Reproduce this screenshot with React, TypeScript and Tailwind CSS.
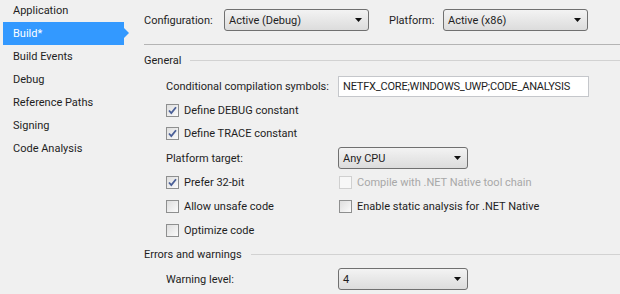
import React from 'react'

const NAV = ['Application', 'Build*', 'Build Events', 'Debug', 'Reference Paths', 'Signing', 'Code Analysis']

function Dropdown({ value, width }: { value: string; width: string }) {
  return (
    <div
      className={`${width} h-[22px] flex items-center justify-between pl-[4px] pr-[6px] rounded-[3px] border border-[#707070]
        bg-gradient-to-b from-[#f3f3f3] to-[#dcdcdc] text-[#1e1e1e]`}
    >
      <span>{value}</span>
      <svg width="7" height="4" viewBox="0 0 7 4">
        <path d="M0 0h7L3.5 4z" fill="#111" />
      </svg>
    </div>
  )
}

function Check({ checked, disabled, label }: { checked?: boolean; disabled?: boolean; label: string }) {
  return (
    <div className={`flex items-center gap-[5px] whitespace-nowrap ${disabled ? 'text-[#a8a8a8]' : 'text-[#1e1e1e]'}`}>
      <div
        className={`w-[13px] h-[13px] border flex items-center justify-center
          ${disabled ? 'border-[#d0d0d0] bg-[#f7f7f7]' : 'border-[#8e8f8f] bg-gradient-to-br from-[#dedede] to-[#fbfbfb]'}`}
      >
        {checked && (
          <svg width="9" height="9" viewBox="0 0 9 9">
            <path d="M1 4.5l2.3 2.6L8 1.2" stroke="#4a5f97" strokeWidth="1.8" fill="none" />
          </svg>
        )}
      </div>
      <span>{label}</span>
    </div>
  )
}

function Section({ title, h }: { title: string; h: string }) {
  return (
    <div className={`${h} flex items-center gap-[9px] text-[#1e1e1e] whitespace-nowrap`}>
      <span>{title}</span>
      <div className="flex-1 h-px bg-[#d2d2d2]" />
    </div>
  )
}

export default function App() {
  return (
    <div
      className="w-[620px] h-[294px] overflow-hidden flex bg-[#f0f0f0] text-[11px] leading-none"
      style={{ fontFamily: 'Roboto, "Liberation Sans", sans-serif' }}
    >
      {/* Left nav */}
      <div className="w-[143px] shrink-0 flex flex-col mt-[-1px] whitespace-nowrap">
        {NAV.map(item =>
          item === 'Build*' ? (
            <div key={item} className="relative h-[23px] ml-[3px] w-[121px] flex items-center pl-[10px] bg-[#3399ff] text-white">
              {item}
              <div className="absolute right-[-5px] top-[6px] w-0 h-0 border-y-[5px] border-y-transparent border-l-[5px] border-l-[#3399ff]" />
            </div>
          ) : (
            <div key={item} className="h-[23px] flex items-center pl-[13px] text-[#1e1e1e]">
              {item}
            </div>
          )
        )}
      </div>

      {/* Main */}
      <div className="flex-1 flex flex-col pl-[1px] whitespace-nowrap">
        <div className="h-[40px] flex items-center text-[#1e1e1e]">
          <span className="w-[80px]">Configuration:</span>
          <Dropdown value="Active (Debug)" width="w-[145px]" />
          <span className="ml-[20px] w-[54px]">Platform:</span>
          <Dropdown value="Active (x86)" width="w-[145px]" />
        </div>
        <div className="h-[8px] pt-[4px]">
          <div className="h-px bg-[#b4b4b4]" />
        </div>

        <Section title="General" h="h-[25px]" />

        <div className="pl-[22px] flex flex-col text-[#1e1e1e]">
          <div className="h-[26px] flex items-center">
            <span className="w-[172px]">Conditional compilation symbols:</span>
            <div className="w-[251px] h-[21px] flex items-center pl-[4px] bg-white border border-[#c5c7cb] overflow-hidden tracking-[-0.2px]">
              NETFX_CORE;WINDOWS_UWP;CODE_ANALYSIS
            </div>
          </div>
          <div className="h-[22px] flex items-center">
            <Check checked label="Define DEBUG constant" />
          </div>
          <div className="h-[24px] flex items-center">
            <Check checked label="Define TRACE constant" />
          </div>
          <div className="h-[26px] flex items-center">
            <span className="w-[172px]">Platform target:</span>
            <Dropdown value="Any CPU" width="w-[130px]" />
          </div>
          <div className="h-[22px] flex items-center">
            <div className="w-[173px]">
              <Check checked label="Prefer 32-bit" />
            </div>
            <Check disabled label="Compile with .NET Native tool chain" />
          </div>
          <div className="h-[26px] flex items-center">
            <div className="w-[173px]">
              <Check label="Allow unsafe code" />
            </div>
            <Check label="Enable static analysis for .NET Native" />
          </div>
          <div className="h-[22px] flex items-center">
            <Check label="Optimize code" />
          </div>
        </div>

        <Section title="Errors and warnings" h="h-[26px]" />

        <div className="pl-[22px] h-[24px] flex items-center text-[#1e1e1e]">
          <span className="w-[172px]">Warning level:</span>
          <Dropdown value="4" width="w-[130px]" />
        </div>
      </div>
    </div>
  )
}
